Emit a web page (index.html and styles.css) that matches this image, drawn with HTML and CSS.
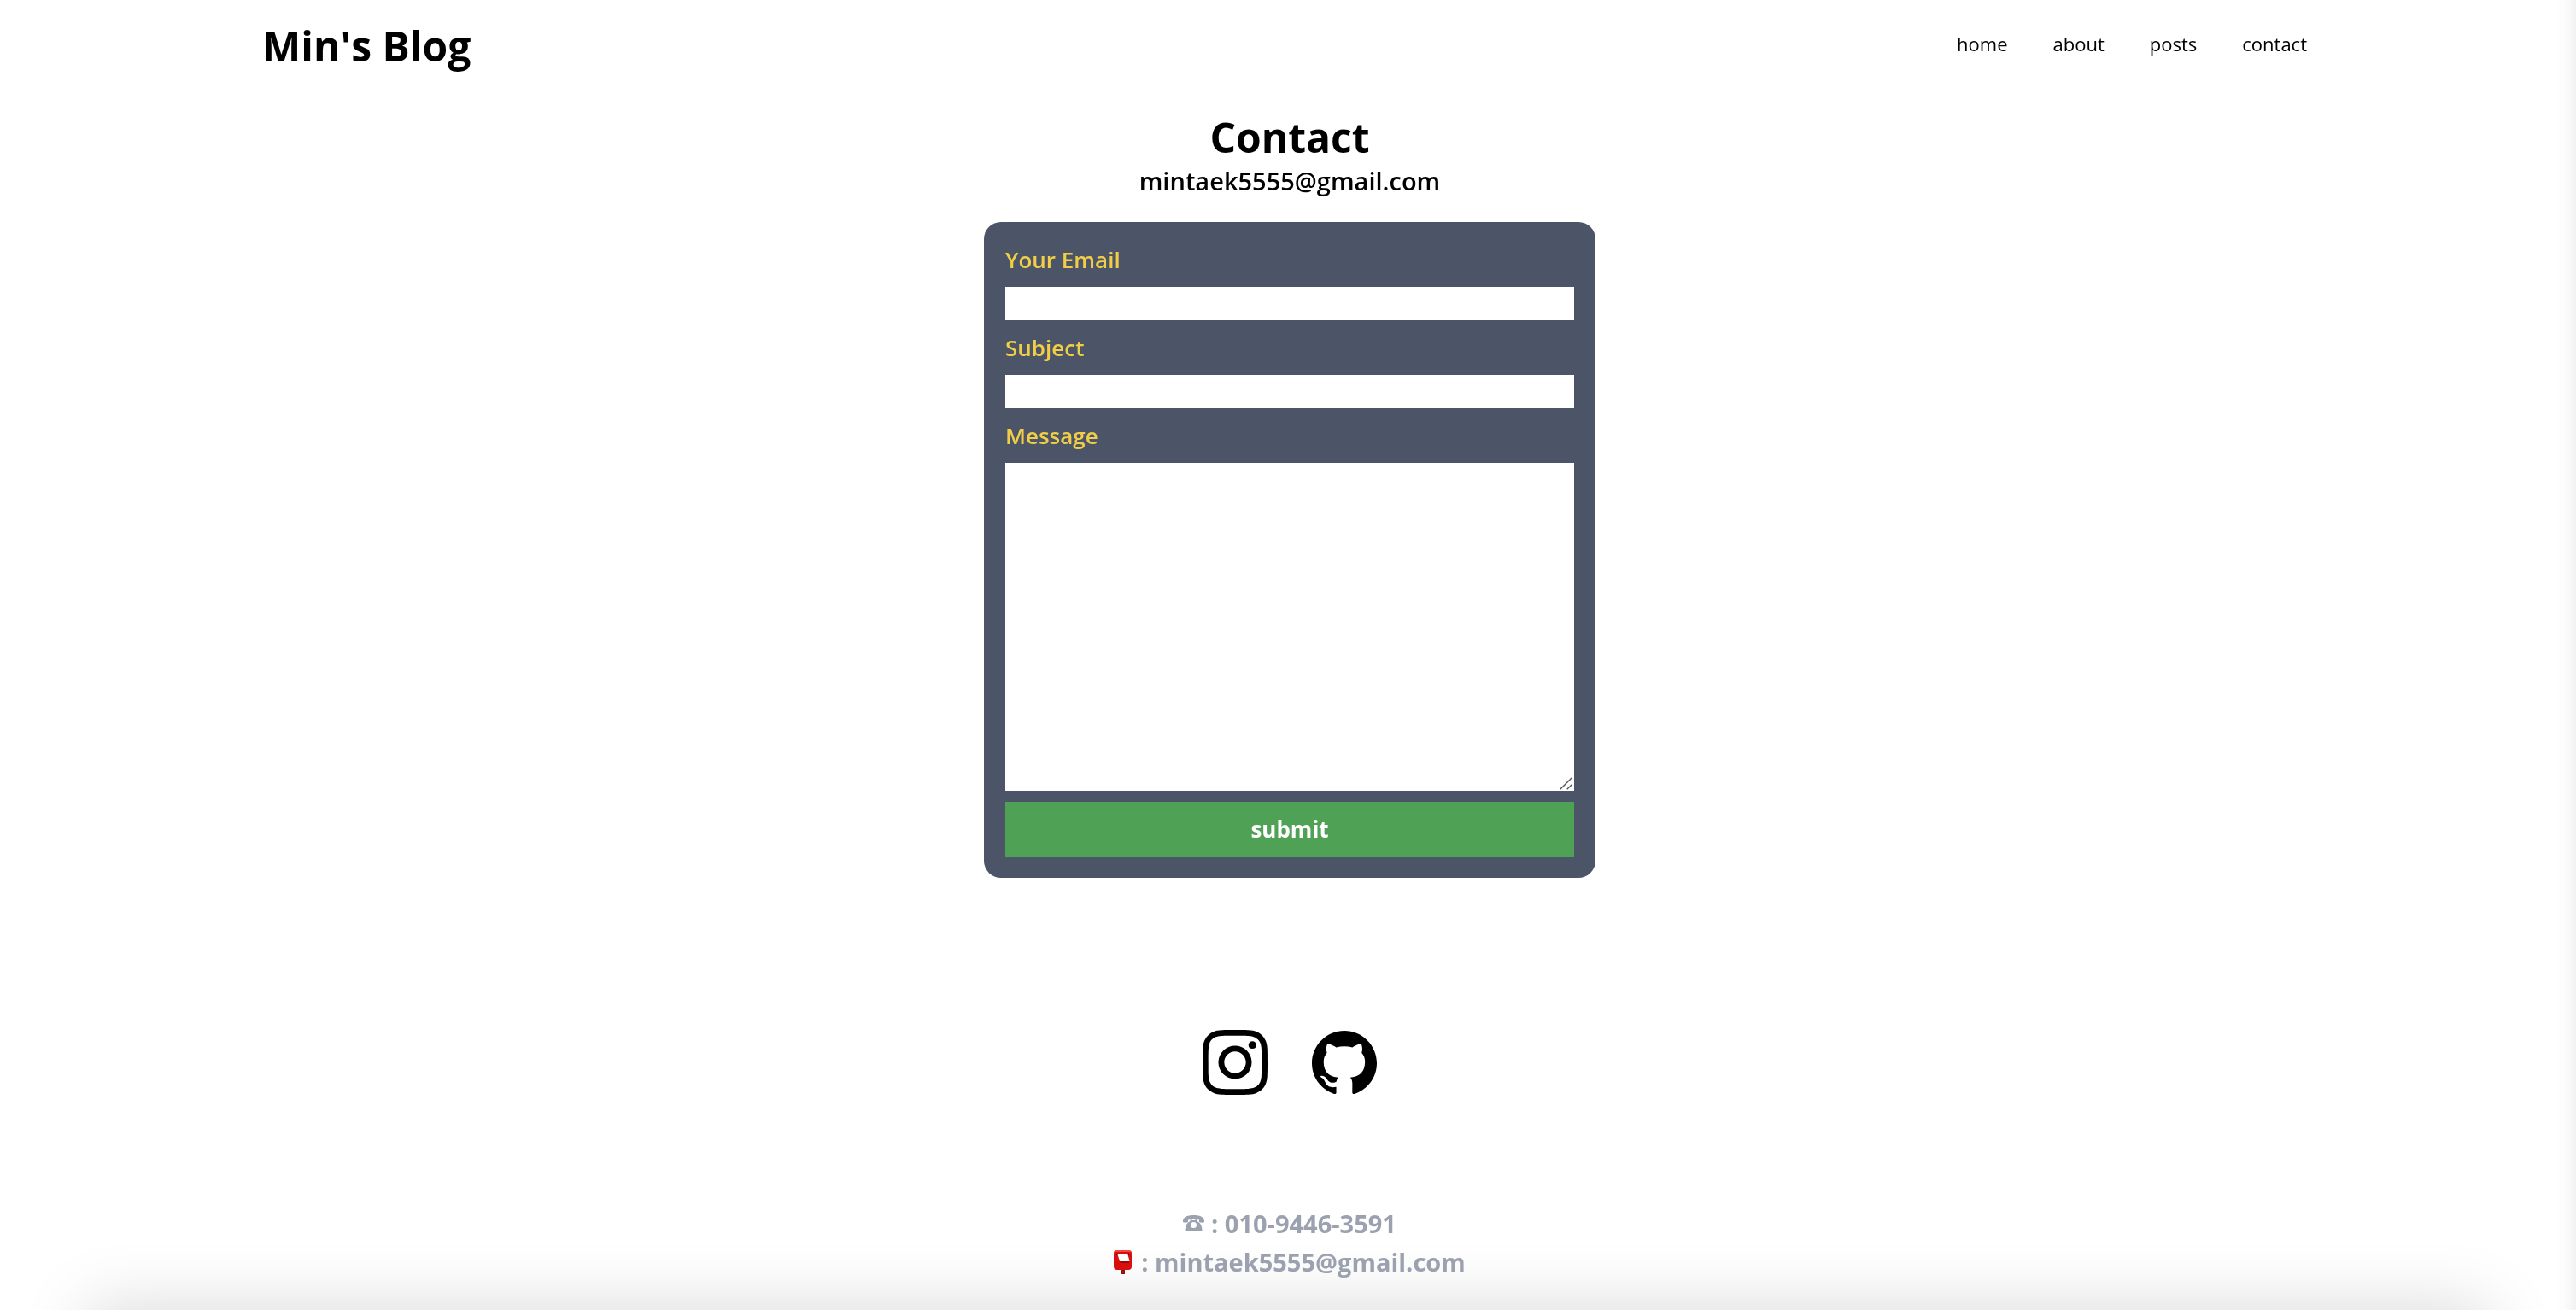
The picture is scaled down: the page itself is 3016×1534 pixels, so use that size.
FILE: index.html
```html
<!DOCTYPE html>
<html lang="en">
<head>
  <meta charset="utf-8">
  <meta name="viewport" content="width=device-width, initial-scale=1">
  <title>Min's Blog</title>
  <link rel="stylesheet" href="styles.css">
</head>
<body>
  <header class="header">
    <a class="logo" href="#">Min's Blog</a>
    <nav class="nav">
      <a href="#">home</a>
      <a href="#">about</a>
      <a href="#">posts</a>
      <a href="#">contact</a>
    </nav>
  </header>

  <main class="main">
    <h1 class="title">Contact</h1>
    <p class="subtitle">mintaek5555@gmail.com</p>
    <form class="form">
      <label for="email">Your Email</label>
      <input id="email" type="email">
      <label for="subject">Subject</label>
      <input id="subject" type="text">
      <label for="message">Message</label>
      <div class="message">
        <textarea id="message"></textarea>
        <svg class="grip" viewBox="0 0 15 15" aria-hidden="true"><path d="M.7 14.3 14.3.7M8.700 14.300 14.300 8.700"/></svg>
      </div>
      <button type="submit">submit</button>
    </form>
  </main>

  <footer class="footer">
    <div class="social">
      <a href="#" aria-label="Instagram">
        <svg viewBox="0 0 24 24"><path d="M12 0C8.74 0 8.333.015 7.053.072 5.775.132 4.905.333 4.140.630c-.789.306-1.459.717-2.126 1.384S.935 3.350.630 4.140C.333 4.905.131 5.775.072 7.053.012 8.333 0 8.740 0 12s.015 3.667.072 4.947c.060 1.277.261 2.148.558 2.913.306.788.717 1.459 1.384 2.126.667.666 1.336 1.079 2.126 1.384.766.296 1.636.499 2.913.558C8.333 23.988 8.740 24 12 24s3.667-.015 4.947-.072c1.277-.060 2.148-.262 2.913-.558.788-.306 1.459-.718 2.126-1.384.666-.667 1.079-1.335 1.384-2.126.296-.765.499-1.636.558-2.913.060-1.280.072-1.687.072-4.947s-.015-3.667-.072-4.947c-.060-1.277-.262-2.149-.558-2.913-.306-.789-.718-1.459-1.384-2.126C21.319 1.347 20.651.935 19.860.630c-.765-.297-1.636-.499-2.913-.558C15.667.012 15.260 0 12 0zm0 2.160c3.203 0 3.585.016 4.850.071 1.170.055 1.805.249 2.227.415.562.217.960.477 1.382.896.419.420.679.819.896 1.381.164.422.360 1.057.413 2.227.057 1.266.070 1.646.070 4.850s-.015 3.585-.074 4.850c-.061 1.170-.256 1.805-.421 2.227-.224.562-.479.960-.899 1.382-.419.419-.824.679-1.380.896-.420.164-1.065.360-2.235.413-1.274.057-1.649.070-4.859.070-3.211 0-3.586-.015-4.859-.074-1.171-.061-1.816-.256-2.236-.421-.569-.224-.960-.479-1.379-.899-.421-.419-.690-.824-.900-1.380-.165-.420-.359-1.065-.420-2.235-.045-1.260-.061-1.649-.061-4.844 0-3.196.016-3.586.061-4.861.061-1.170.255-1.814.420-2.234.210-.570.479-.960.900-1.381.419-.419.810-.689 1.379-.898.420-.166 1.051-.361 2.221-.421 1.275-.045 1.650-.060 4.859-.060l.045.030zm0 3.678a6.162 6.162 0 1 0 0 12.324 6.162 6.162 0 1 0 0-12.324zM12 16c-2.210 0-4-1.790-4-4s1.790-4 4-4 4 1.790 4 4-1.790 4-4 4zm7.846-10.405a1.441 1.441 0 0 1-2.880 0 1.440 1.440 0 0 1 2.880 0z"/></svg>
      </a>
      <a href="#" aria-label="GitHub">
        <svg viewBox="0 0 24 24"><path d="M12 .297c-6.630 0-12 5.373-12 12 0 5.303 3.438 9.800 8.205 11.385.600.113.820-.258.820-.577 0-.285-.010-1.040-.015-2.040-3.338.724-4.042-1.610-4.042-1.610C4.422 18.070 3.633 17.700 3.633 17.700c-1.087-.744.084-.729.084-.729 1.205.084 1.838 1.236 1.838 1.236 1.070 1.835 2.809 1.305 3.495.998.108-.776.417-1.305.760-1.605-2.665-.300-5.466-1.332-5.466-5.930 0-1.310.465-2.380 1.235-3.220-.135-.303-.540-1.523.105-3.176 0 0 1.005-.322 3.300 1.230.960-.267 1.980-.399 3-.405 1.020.006 2.040.138 3 .405 2.280-1.552 3.285-1.230 3.285-1.230.645 1.653.240 2.873.120 3.176.765.840 1.230 1.910 1.230 3.220 0 4.610-2.805 5.625-5.475 5.920.420.360.810 1.096.810 2.220 0 1.606-.015 2.896-.015 3.286 0 .315.210.690.825.570C20.565 22.092 24 17.592 24 12.297c0-6.627-5.373-12-12-12"/></svg>
      </a>
    </div>
    <p class="line">
      <svg class="phone" viewBox="0 0 25 19" role="img" aria-label="Phone"><path d="M0 6C1 2 5 0 12.500 0S24 2 25 6v2q-3 1.500-6 0V5.500q-6.500-2-13 0V8q-3 1.500-6 0z"/><path fill-rule="evenodd" d="M8.500 4.500h2V6h4V4.500h2V7c4 2 6 5 6 12h-20c0-7 2-10 6-12zM12.500 8a3.500 3.500 0 1 0 0 7 3.500 3.500 0 0 0 0-7z"/></svg>
      <span>: 010-9446-3591</span>
    </p>
    <p class="line">
      <svg class="postbox" viewBox="0 0 22 28" role="img" aria-label="Email"><path fill="#8d1712" d="M8 20h5v8H8z"/><rect width="21" height="23" rx="4" fill="#d90f0f"/><path fill="#f4473f" d="M4 0h13q3 0 4 2H0q1-2 4-2z"/><path fill="#3c0808" d="M3 4h15v2H3z"/><path fill="#9c0808" d="M7 13h11v2H8z"/><path fill="#fff" d="M4.500 5h12l2 8H7z"/></svg>
      <span>: mintaek5555@gmail.com</span>
    </p>
  </footer>
</body>
</html>
```

FILE: styles.css
```css
* {
  box-sizing: border-box;
  margin: 0;
  padding: 0;
}

body {
  min-height: 100vh;
  padding-left: 4px;
  overflow-x: hidden;
  position: relative;
  background: #fff;
  color: #000;
  font-family: "Open Sans", "Noto Sans", sans-serif;
  font-size: 26px;
  line-height: 38px;
}

/* soft shade along the bottom and right window edges */
body::before,
body::after {
  content: "";
  position: fixed;
  z-index: -1;
}

body::before {
  top: 100%;
  left: 110px;
  right: 110px;
  height: 200px;
  box-shadow: 0 4px 80px 8px rgba(0, 0, 0, 0.15);
}

body::after {
  top: 0;
  right: 0;
  bottom: 0;
  width: 26px;
  background: linear-gradient(to right, transparent, rgba(0, 0, 0, 0.01) 50%, rgba(0, 0, 0, 0.05));
}

a {
  color: inherit;
  text-decoration: none;
}

.header {
  display: flex;
  align-items: flex-start;
  justify-content: space-between;
  max-width: 2458px;
  margin: 0 auto;
  padding: 22px 38px 18px 26px;
}

.logo {
  font-size: 48px;
  font-weight: 700;
  line-height: 64px;
}

.nav {
  display: flex;
  gap: 53px;
  font-size: 22px;
  line-height: 58px;
}

.main {
  display: flex;
  flex-direction: column;
  align-items: center;
  padding: 25px;
}

.title {
  font-size: 48px;
  font-weight: 700;
  line-height: 64px;
}

.subtitle {
  margin-bottom: 29px;
  font-size: 29px;
  font-weight: 600;
}

.form {
  display: flex;
  flex-direction: column;
  gap: 13px;
  width: 100%;
  max-width: 716px;
  padding: 25px;
  border-radius: 20px;
  background: #4b5567;
}

.form label {
  color: #f2ce47;
  font-weight: 600;
}

.form input,
.form textarea {
  display: block;
  width: 100%;
  border: 0;
  background: #fff;
  font: inherit;
}

.form input {
  height: 39px;
}

.form textarea {
  height: 384px;
  resize: none;
}

.message {
  position: relative;
}

.grip {
  position: absolute;
  right: 2px;
  bottom: 1px;
  width: 15px;
  height: 15px;
  fill: none;
  stroke: #555;
  stroke-width: 1.4;
}

.form button {
  height: 64px;
  border: 0;
  background: #4ea155;
  color: #fff;
  font: inherit;
  font-weight: 700;
}

.footer {
  display: flex;
  flex-direction: column;
  align-items: center;
  padding-top: 153px;
  color: #9ba1af;
  font-size: 29px;
  font-weight: 700;
  line-height: 45px;
}

.social {
  display: flex;
  gap: 52px;
  margin-bottom: 128px;
}

.social svg {
  display: block;
  width: 76px;
  height: 76px;
  fill: #000;
}

.line {
  display: flex;
  align-items: center;
  gap: 8px;
}

.phone {
  width: 25px;
  height: 19px;
  fill: currentColor;
}

.postbox {
  width: 22px;
  height: 28px;
  margin-right: 2px;
}
```
